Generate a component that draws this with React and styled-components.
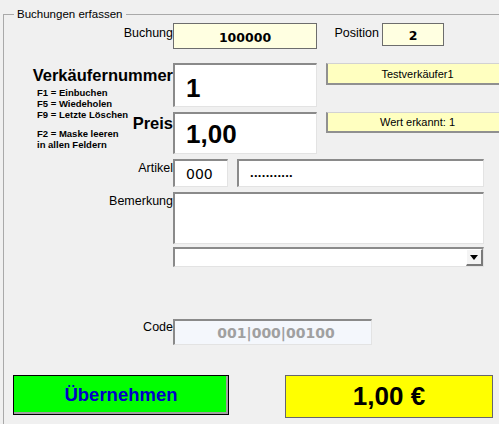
import styled, { createGlobalStyle } from 'styled-components';

const GlobalStyle = createGlobalStyle`
  body {
    margin: 0;
    background: #f0f0f0;
    font-family: "Liberation Sans", Arial, sans-serif;
    color: #000;
    overflow: hidden;
  }
`;

const Page = styled.div`
  width: 499px;
  height: 424px;
  overflow: hidden;
`;

const GroupBox = styled.fieldset`
  margin: 7px 0 0 3px;
  padding: 0;
  width: 520px;
  height: 440px;
  min-width: 0;
  border: 1px solid #a9a9a9;
  box-sizing: border-box;
`;

const Legend = styled.legend`
  margin-left: 10px;
  padding: 0 3px;
  font-size: 11.5px;
  line-height: 14px;
`;

const Form = styled.div`
  display: flex;
  flex-direction: column;
  padding-top: 2px;
`;

const Row = styled.div`
  display: flex;
  align-items: flex-start;
  margin-top: ${(p) => p.$top || 0}px;
`;

const Label = styled.div`
  width: ${(p) => p.$width || 169}px;
  flex: none;
  text-align: right;
  font-size: 12.5px;
  line-height: 15px;
  padding-top: ${(p) => p.$pad ?? 2}px;
  margin-left: ${(p) => p.$left || 0}px;
  white-space: nowrap;
`;

const InfoBox = styled.div`
  box-sizing: border-box;
  width: ${(p) => p.$w}px;
  height: ${(p) => p.$h}px;
  margin-left: ${(p) => p.$left || 0}px;
  background: #ffffe1;
  border: 1px solid #6d6d6d;
  display: flex;
  align-items: center;
  justify-content: center;
  font-family: "DejaVu Sans", sans-serif;
  font-weight: bold;
  font-size: 12.5px;
  padding-top: 2px;
`;

const Sunken = styled.div`
  box-sizing: border-box;
  width: ${(p) => p.$w}px;
  height: ${(p) => p.$h}px;
  margin-left: ${(p) => p.$left || 0}px;
  background: ${(p) => p.$bg || '#fff'};
  border-style: solid;
  border-width: 2px 1px 1px 2px;
  border-color: #8a8a8a #e3e3e3 #e3e3e3 #8a8a8a;
  display: flex;
  align-items: center;
  position: relative;
`;

const SellerBlock = styled.div`
  display: grid;
  grid-template-columns: 169px 144px 190px;
  grid-template-rows: 44px 42px;
  row-gap: 5px;
  margin-top: 14px;
`;

const LeftCol = styled.div`
  grid-row: 1 / span 2;
  display: flex;
  flex-direction: column;
`;

const BigLabel = styled.div`
  font-size: 16.5px;
  font-weight: bold;
  line-height: 19px;
  text-align: right;
  white-space: nowrap;
  margin-top: ${(p) => p.$top || 0}px;
`;

const HelpRow = styled.div`
  display: flex;
  justify-content: space-between;
  align-items: flex-start;
  margin-top: 2px;
`;

const Help = styled.div`
  padding-left: 33px;
  font-size: 9.5px;
  font-weight: bold;
  line-height: 11px;
  white-space: nowrap;
`;

const HelpGroup = styled.div`
  margin-top: ${(p) => p.$top || 0}px;
`;

const BigValue = styled.span`
  font-size: 26px;
  font-weight: bold;
  padding-left: 11px;
  padding-top: ${(p) => p.$pad || 0}px;
`;

const Status = styled.div`
  box-sizing: border-box;
  margin-left: 9px;
  height: ${(p) => p.$h}px;
  background: #ffffc0;
  border-style: solid;
  border-width: 1px 0 2px 2px;
  border-color: #d2d2d2 #909090 #909090 #909090;
  display: flex;
  align-items: center;
  justify-content: center;
  font-size: 11px;
`;

const PlainValue = styled.span`
  font-family: "DejaVu Sans", sans-serif;
  font-size: 14px;
  padding-left: 11px;
`;

const Dots = styled.span`
  font-size: 13px;
  font-weight: bold;
  padding-left: 11px;
  padding-bottom: 3px;
  letter-spacing: 0.3px;
`;

const DropButton = styled.div`
  position: absolute;
  right: 0;
  top: 0;
  width: 17px;
  height: 17px;
  box-sizing: border-box;
  background: #f4f4f4;
  border-style: solid;
  border-width: 1px 2px 2px 1px;
  border-color: #fff #7a7a7a #7a7a7a #fff;
  display: flex;
  align-items: center;
  justify-content: center;
`;

const CodeValue = styled.span`
  width: 100%;
  text-align: center;
  font-family: "DejaVu Sans", sans-serif;
  font-weight: bold;
  font-size: 14px;
  color: #a0a0a0;
  padding-left: 6px;
`;

const ApplyButton = styled.button`
  width: 216px;
  height: 40px;
  margin-left: 9px;
  background: #00ff00;
  border: 1px solid #000;
  box-shadow: inset -2px -2px 0 #a0a0a0;
  font-family: "Liberation Sans", Arial, sans-serif;
  font-size: 18.5px;
  font-weight: bold;
  color: #0000c8;
  padding: 0;
`;

const Total = styled.div`
  box-sizing: border-box;
  width: 208px;
  height: 43px;
  margin-left: 56px;
  background: #ffff00;
  border: 1px solid #66666e;
  display: flex;
  align-items: center;
  justify-content: center;
  font-size: 26px;
  font-weight: bold;
`;

export default function App() {
  return (
    <Page>
      <GlobalStyle />
      <GroupBox>
        <Legend>Buchungen erfassen</Legend>
        <Form>
          <Row>
            <Label $pad={3}>Buchung</Label>
            <InfoBox $w={144} $h={26}>100000</InfoBox>
            <Label $width={45} $left={17} $pad={3}>Position</Label>
            <InfoBox $w={62} $h={23} $left={3}>2</InfoBox>
          </Row>

          <SellerBlock>
            <LeftCol>
              <BigLabel $top={3}>Verkäufernummer</BigLabel>
              <HelpRow>
                <Help>
                  <HelpGroup>
                    F1 = Einbuchen<br />
                    F5 = Wiedeholen<br />
                    F9 = Letzte Löschen
                  </HelpGroup>
                  <HelpGroup $top={8}>
                    F2 = Maske leeren<br />
                    in allen Feldern
                  </HelpGroup>
                </Help>
                <BigLabel $top={27}>Preis</BigLabel>
              </HelpRow>
            </LeftCol>
            <Sunken $w={144} $h={44}>
              <BigValue $pad={5}>1</BigValue>
            </Sunken>
            <Status $h={22}>Testverkäufer1</Status>
            <Sunken $w={144} $h={42}>
              <BigValue $pad={2}>1,00</BigValue>
            </Sunken>
            <Status $h={21}>Wert erkannt: 1</Status>
          </SellerBlock>

          <Row $top={5}>
            <Label>Artikel</Label>
            <Sunken $w={55} $h={28}>
              <PlainValue>000</PlainValue>
            </Sunken>
            <Sunken $w={247} $h={28} $left={9}>
              <Dots>...........</Dots>
            </Sunken>
          </Row>

          <Row $top={5}>
            <Label>Bemerkung</Label>
            <Sunken $w={311} $h={52} />
          </Row>

          <Row $top={3}>
            <Label />
            <Sunken $w={311} $h={20}>
              <DropButton>
                <svg width="8" height="5" viewBox="0 0 8 5">
                  <path d="M0 0h8L4 5z" fill="#000" />
                </svg>
              </DropButton>
            </Sunken>
          </Row>

          <Row $top={52}>
            <Label $pad={1}>Code</Label>
            <Sunken $w={199} $h={26} $bg="#f4f7fc">
              <CodeValue>001|000|00100</CodeValue>
            </Sunken>
          </Row>

          <Row $top={30}>
            <ApplyButton>Übernehmen</ApplyButton>
            <Total>1,00 €</Total>
          </Row>
        </Form>
      </GroupBox>
    </Page>
  );
}
